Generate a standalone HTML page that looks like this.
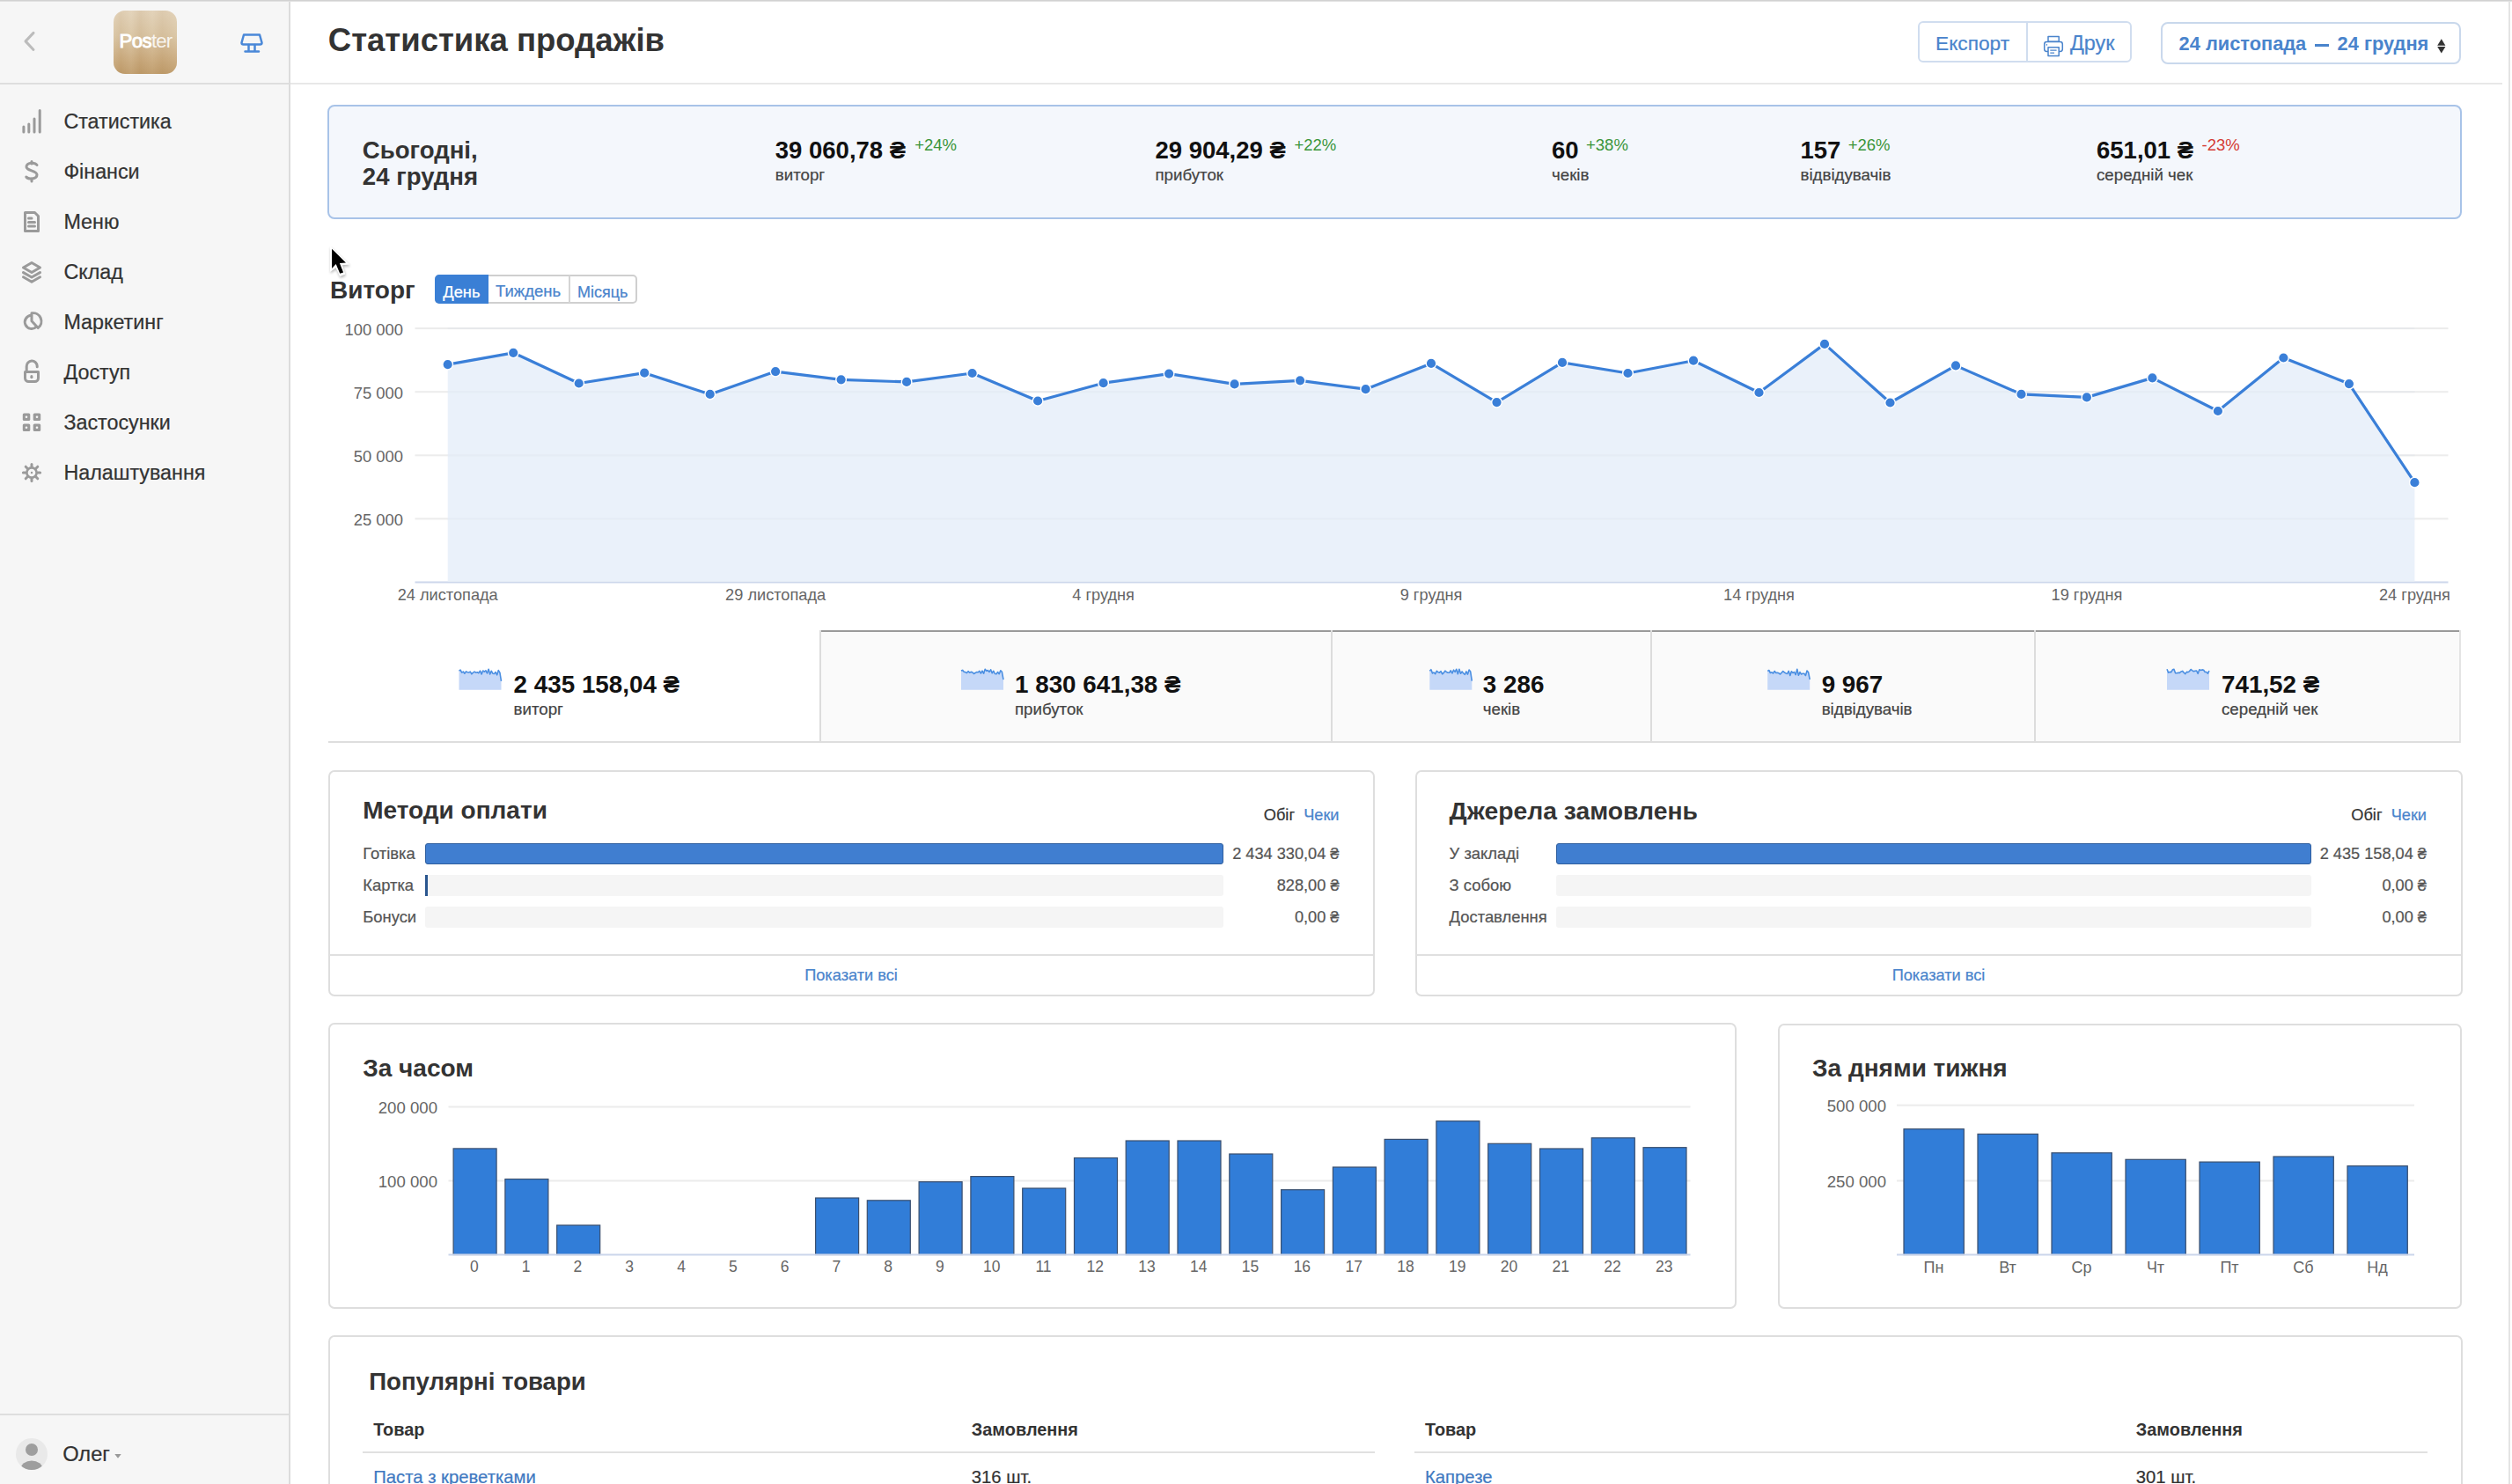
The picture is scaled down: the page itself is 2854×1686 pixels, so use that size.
<!DOCTYPE html>
<html><head><meta charset="utf-8"><style>
html,body{margin:0;padding:0;width:2854px;height:1686px;overflow:hidden;background:#fff;}
body{position:relative;font-family:"Liberation Sans",sans-serif;}
.t{position:absolute;line-height:1;white-space:nowrap;z-index:3;}
.r{-webkit-text-stroke:0.22px currentColor;}
svg.ov{position:absolute;left:0;top:0;z-index:2;}
</style></head><body>

<div style="position:absolute;left:0;top:0;width:328px;height:1686px;background:#f6f6f6;"></div>
<div style="position:absolute;left:328px;top:0;width:2px;height:1686px;background:#dcdcdc;"></div>
<div style="position:absolute;left:0;top:94px;width:328px;height:2px;background:#dedede;"></div>
<div style="position:absolute;left:0;top:1606px;width:328px;height:2px;background:#dedede;"></div>
<div style="position:absolute;left:0;top:0;width:2854px;height:2px;background:linear-gradient(#c9c9c9,#e9e9e9);z-index:5;"></div>
<div style="position:absolute;left:2850px;top:0;width:2px;height:1686px;background:#e4e4e4;"></div>
<div style="position:absolute;left:330px;top:94px;width:2513px;height:2px;background:#e8e8e8;"></div>
<div style="position:absolute;left:129px;top:12px;width:72px;height:72px;border-radius:13px;overflow:hidden;background:linear-gradient(180deg,#e2d2b8 0%,#d9c4a2 40%,#cbac80 75%,#bf9c6b 100%);"><div style="position:absolute;inset:0;background:linear-gradient(90deg,rgba(255,255,255,0.05) 0px,rgba(140,90,40,0.05) 8px,rgba(255,255,255,0.06) 20px,rgba(140,90,40,0.07) 30px,rgba(255,255,255,0.04) 44px,rgba(140,90,40,0.06) 55px,rgba(255,255,255,0.05) 72px);"></div></div>
<div style="position:absolute;left:2179px;top:24px;width:243px;height:47px;border:2px solid #d0ddef;border-radius:6px;box-sizing:border-box;"></div>
<div style="position:absolute;left:2302px;top:24px;width:2px;height:47px;background:#d0ddef;"></div>
<div style="position:absolute;left:2455px;top:25px;width:341px;height:48px;border:2px solid #c9d8ec;border-radius:8px;box-sizing:border-box;"></div>
<div style="position:absolute;left:2630.3px;top:50.2px;width:15.4px;height:2.6px;background:#4a84cc;"></div>
<div style="position:absolute;left:372px;top:119px;width:2425px;height:130px;border:2px solid #a8c3e8;border-radius:8px;box-sizing:border-box;background:#f4f7fc;"></div>
<div style="position:absolute;left:494px;top:312px;width:230px;height:33px;border:2px solid #cfcfcf;border-radius:5px;box-sizing:border-box;"></div>
<div style="position:absolute;left:494px;top:312px;width:61px;height:33px;background:#3a7fd5;border-radius:5px 0 0 5px;"></div>
<div style="position:absolute;left:646px;top:313px;width:2px;height:31px;background:#d4d4d4;"></div>
<div style="position:absolute;left:931px;top:716px;width:1864px;height:126px;background:#fafafa;"></div>
<div style="position:absolute;left:931px;top:715.5px;width:1864px;height:2px;background:#9a9a9a;"></div>
<div style="position:absolute;left:931px;top:716px;width:2px;height:126px;background:#dcdcdc;"></div>
<div style="position:absolute;left:1511.5px;top:716px;width:2px;height:126px;background:#dcdcdc;"></div>
<div style="position:absolute;left:1874.5px;top:716px;width:2px;height:126px;background:#dcdcdc;"></div>
<div style="position:absolute;left:2310.5px;top:716px;width:2px;height:126px;background:#dcdcdc;"></div>
<div style="position:absolute;left:2793.5px;top:716px;width:2px;height:128px;background:#e4e4e4;"></div>
<div style="position:absolute;left:373px;top:842px;width:2422px;height:2px;background:#dedede;"></div>
<div style="position:absolute;left:372.5px;top:874.5px;width:1189px;height:257px;border:2px solid #dedede;border-radius:7px;box-sizing:border-box;background:#fff;"></div>
<div style="position:absolute;left:1607.5px;top:874.5px;width:1190px;height:257px;border:2px solid #dedede;border-radius:7px;box-sizing:border-box;background:#fff;"></div>
<div style="position:absolute;left:374px;top:1084px;width:1186px;height:2px;background:#e0e0e0;"></div>
<div style="position:absolute;left:1609px;top:1084px;width:1187px;height:2px;background:#e0e0e0;"></div>
<div style="position:absolute;left:483.3px;top:958px;width:906.5px;height:24px;background:#f5f5f5;border-radius:3px;"></div>
<div style="position:absolute;left:483.3px;top:958px;width:906.5px;height:24px;background:#407ed0;border:1.5px solid #2f5e9e;border-radius:3px;box-sizing:border-box;"></div>
<div style="position:absolute;left:483.3px;top:994px;width:906.5px;height:24px;background:#f5f5f5;border-radius:3px;"></div>
<div style="position:absolute;left:483.3px;top:994px;width:2.4px;height:24px;background:#2a568f;"></div>
<div style="position:absolute;left:483.3px;top:1030px;width:906.5px;height:24px;background:#f5f5f5;border-radius:3px;"></div>
<div style="position:absolute;left:1768.2px;top:958px;width:857.4999999999998px;height:24px;background:#f5f5f5;border-radius:3px;"></div>
<div style="position:absolute;left:1768.2px;top:958px;width:857.4999999999998px;height:24px;background:#407ed0;border:1.5px solid #2f5e9e;border-radius:3px;box-sizing:border-box;"></div>
<div style="position:absolute;left:1768.2px;top:994px;width:857.4999999999998px;height:24px;background:#f5f5f5;border-radius:3px;"></div>
<div style="position:absolute;left:1768.2px;top:1030px;width:857.4999999999998px;height:24px;background:#f5f5f5;border-radius:3px;"></div>
<div style="position:absolute;left:372.5px;top:1162px;width:1600px;height:324.5px;border:2px solid #dedede;border-radius:7px;box-sizing:border-box;background:#fff;"></div>
<div style="position:absolute;left:2019.5px;top:1162.5px;width:777.5px;height:324px;border:2px solid #dedede;border-radius:7px;box-sizing:border-box;background:#fff;"></div>
<div style="position:absolute;left:372.5px;top:1517px;width:2425px;height:300px;border:2px solid #dedede;border-radius:7px;box-sizing:border-box;background:#fff;"></div>
<div style="position:absolute;left:412px;top:1649px;width:1150px;height:2px;background:#e0e0e0;"></div>
<div style="position:absolute;left:1607px;top:1649px;width:1151px;height:2px;background:#e0e0e0;"></div>
<svg class="ov" width="2854" height="1686" viewBox="0 0 2854 1686"><rect x="471.5" y="372.1" width="2310" height="2" fill="#ececec"/>
<rect x="471.5" y="444.2" width="2310" height="2" fill="#ececec"/>
<rect x="471.5" y="516.3" width="2310" height="2" fill="#ececec"/>
<rect x="471.5" y="588.4" width="2310" height="2" fill="#ececec"/>
<rect x="471.5" y="660.5" width="2310" height="2" fill="#ccd6eb"/>
<path d="M508.7,660.5 L508.7,414.1 L583.2,400.8 L657.7,435.5 L732.2,423.7 L806.7,447.9 L881.1,422.1 L955.6,431.3 L1030.1,433.9 L1104.6,424.0 L1179.1,455.5 L1253.6,435.2 L1328.1,424.6 L1402.6,436.4 L1477.1,432.3 L1551.6,442.2 L1626.0,412.9 L1700.5,457.1 L1775.0,411.9 L1849.5,424.0 L1924.0,409.7 L1998.5,446.0 L2073.0,390.9 L2147.5,457.5 L2222.0,415.4 L2296.5,447.9 L2370.9,451.4 L2445.4,429.4 L2519.9,467.0 L2594.4,406.5 L2668.9,436.1 L2743.4,548.2 L2743.4,660.5 Z" fill="#eaf1fa"/>
<rect x="508.7" y="372.1" width="2234.7" height="2" fill="#dde3ec" opacity="0.35"/>
<rect x="508.7" y="444.2" width="2234.7" height="2" fill="#dde3ec" opacity="0.35"/>
<rect x="508.7" y="516.3" width="2234.7" height="2" fill="#dde3ec" opacity="0.35"/>
<rect x="508.7" y="588.4" width="2234.7" height="2" fill="#dde3ec" opacity="0.35"/>
<path d="M508.7,414.1 L583.2,400.8 L657.7,435.5 L732.2,423.7 L806.7,447.9 L881.1,422.1 L955.6,431.3 L1030.1,433.9 L1104.6,424.0 L1179.1,455.5 L1253.6,435.2 L1328.1,424.6 L1402.6,436.4 L1477.1,432.3 L1551.6,442.2 L1626.0,412.9 L1700.5,457.1 L1775.0,411.9 L1849.5,424.0 L1924.0,409.7 L1998.5,446.0 L2073.0,390.9 L2147.5,457.5 L2222.0,415.4 L2296.5,447.9 L2370.9,451.4 L2445.4,429.4 L2519.9,467.0 L2594.4,406.5 L2668.9,436.1 L2743.4,548.2" fill="none" stroke="#3a7fd8" stroke-width="3.2" stroke-linejoin="round"/>
<circle cx="508.7" cy="414.1" r="5.8" fill="#3a7fd8" stroke="#fff" stroke-width="1.4"/>
<circle cx="583.2" cy="400.8" r="5.8" fill="#3a7fd8" stroke="#fff" stroke-width="1.4"/>
<circle cx="657.7" cy="435.5" r="5.8" fill="#3a7fd8" stroke="#fff" stroke-width="1.4"/>
<circle cx="732.2" cy="423.7" r="5.8" fill="#3a7fd8" stroke="#fff" stroke-width="1.4"/>
<circle cx="806.7" cy="447.9" r="5.8" fill="#3a7fd8" stroke="#fff" stroke-width="1.4"/>
<circle cx="881.1" cy="422.1" r="5.8" fill="#3a7fd8" stroke="#fff" stroke-width="1.4"/>
<circle cx="955.6" cy="431.3" r="5.8" fill="#3a7fd8" stroke="#fff" stroke-width="1.4"/>
<circle cx="1030.1" cy="433.9" r="5.8" fill="#3a7fd8" stroke="#fff" stroke-width="1.4"/>
<circle cx="1104.6" cy="424.0" r="5.8" fill="#3a7fd8" stroke="#fff" stroke-width="1.4"/>
<circle cx="1179.1" cy="455.5" r="5.8" fill="#3a7fd8" stroke="#fff" stroke-width="1.4"/>
<circle cx="1253.6" cy="435.2" r="5.8" fill="#3a7fd8" stroke="#fff" stroke-width="1.4"/>
<circle cx="1328.1" cy="424.6" r="5.8" fill="#3a7fd8" stroke="#fff" stroke-width="1.4"/>
<circle cx="1402.6" cy="436.4" r="5.8" fill="#3a7fd8" stroke="#fff" stroke-width="1.4"/>
<circle cx="1477.1" cy="432.3" r="5.8" fill="#3a7fd8" stroke="#fff" stroke-width="1.4"/>
<circle cx="1551.6" cy="442.2" r="5.8" fill="#3a7fd8" stroke="#fff" stroke-width="1.4"/>
<circle cx="1626.0" cy="412.9" r="5.8" fill="#3a7fd8" stroke="#fff" stroke-width="1.4"/>
<circle cx="1700.5" cy="457.1" r="5.8" fill="#3a7fd8" stroke="#fff" stroke-width="1.4"/>
<circle cx="1775.0" cy="411.9" r="5.8" fill="#3a7fd8" stroke="#fff" stroke-width="1.4"/>
<circle cx="1849.5" cy="424.0" r="5.8" fill="#3a7fd8" stroke="#fff" stroke-width="1.4"/>
<circle cx="1924.0" cy="409.7" r="5.8" fill="#3a7fd8" stroke="#fff" stroke-width="1.4"/>
<circle cx="1998.5" cy="446.0" r="5.8" fill="#3a7fd8" stroke="#fff" stroke-width="1.4"/>
<circle cx="2073.0" cy="390.9" r="5.8" fill="#3a7fd8" stroke="#fff" stroke-width="1.4"/>
<circle cx="2147.5" cy="457.5" r="5.8" fill="#3a7fd8" stroke="#fff" stroke-width="1.4"/>
<circle cx="2222.0" cy="415.4" r="5.8" fill="#3a7fd8" stroke="#fff" stroke-width="1.4"/>
<circle cx="2296.5" cy="447.9" r="5.8" fill="#3a7fd8" stroke="#fff" stroke-width="1.4"/>
<circle cx="2370.9" cy="451.4" r="5.8" fill="#3a7fd8" stroke="#fff" stroke-width="1.4"/>
<circle cx="2445.4" cy="429.4" r="5.8" fill="#3a7fd8" stroke="#fff" stroke-width="1.4"/>
<circle cx="2519.9" cy="467.0" r="5.8" fill="#3a7fd8" stroke="#fff" stroke-width="1.4"/>
<circle cx="2594.4" cy="406.5" r="5.8" fill="#3a7fd8" stroke="#fff" stroke-width="1.4"/>
<circle cx="2668.9" cy="436.1" r="5.8" fill="#3a7fd8" stroke="#fff" stroke-width="1.4"/>
<circle cx="2743.4" cy="548.2" r="5.8" fill="#3a7fd8" stroke="#fff" stroke-width="1.4"/>
<path d="M521.5,783.8 L521.5,762.2 L523.1,761.1 L524.7,764.1 L526.3,763.1 L527.9,765.2 L529.5,762.9 L531.1,763.7 L532.7,764.0 L534.3,763.1 L535.9,765.8 L537.5,764.1 L539.1,763.1 L540.7,764.2 L542.3,763.8 L543.9,764.7 L545.5,762.1 L547.1,766.0 L548.7,762.0 L550.3,763.1 L551.9,761.8 L553.5,765.0 L555.1,760.2 L556.7,766.0 L558.3,762.3 L559.9,765.2 L561.5,765.5 L563.1,763.6 L564.7,766.8 L566.3,761.6 L567.9,764.1 L569.5,773.9 L569.5,783.8 Z" fill="#c5d8f8"/>
<path d="M521.5,762.2 L523.1,761.1 L524.7,764.1 L526.3,763.1 L527.9,765.2 L529.5,762.9 L531.1,763.7 L532.7,764.0 L534.3,763.1 L535.9,765.8 L537.5,764.1 L539.1,763.1 L540.7,764.2 L542.3,763.8 L543.9,764.7 L545.5,762.1 L547.1,766.0 L548.7,762.0 L550.3,763.1 L551.9,761.8 L553.5,765.0 L555.1,760.2 L556.7,766.0 L558.3,762.3 L559.9,765.2 L561.5,765.5 L563.1,763.6 L564.7,766.8 L566.3,761.6 L567.9,764.1 L569.5,773.9" fill="none" stroke="#4b8fe2" stroke-width="1.6" stroke-linejoin="round"/>
<path d="M1092.0,783.8 L1092.0,762.1 L1093.6,761.4 L1095.2,763.2 L1096.8,763.6 L1098.4,764.6 L1100.0,762.7 L1101.6,764.2 L1103.2,763.4 L1104.8,763.7 L1106.4,765.5 L1108.0,764.5 L1109.6,763.6 L1111.2,763.8 L1112.8,762.4 L1114.4,765.0 L1116.0,762.2 L1117.6,765.2 L1119.2,760.2 L1120.8,762.3 L1122.4,761.5 L1124.0,763.4 L1125.6,760.8 L1127.2,764.7 L1128.8,762.3 L1130.4,765.5 L1132.0,765.8 L1133.6,763.5 L1135.2,765.7 L1136.8,761.8 L1138.4,763.4 L1140.0,772.1 L1140.0,783.8 Z" fill="#c5d8f8"/>
<path d="M1092.0,762.1 L1093.6,761.4 L1095.2,763.2 L1096.8,763.6 L1098.4,764.6 L1100.0,762.7 L1101.6,764.2 L1103.2,763.4 L1104.8,763.7 L1106.4,765.5 L1108.0,764.5 L1109.6,763.6 L1111.2,763.8 L1112.8,762.4 L1114.4,765.0 L1116.0,762.2 L1117.6,765.2 L1119.2,760.2 L1120.8,762.3 L1122.4,761.5 L1124.0,763.4 L1125.6,760.8 L1127.2,764.7 L1128.8,762.3 L1130.4,765.5 L1132.0,765.8 L1133.6,763.5 L1135.2,765.7 L1136.8,761.8 L1138.4,763.4 L1140.0,772.1" fill="none" stroke="#4b8fe2" stroke-width="1.6" stroke-linejoin="round"/>
<path d="M1624.3,783.8 L1624.3,762.3 L1625.9,760.7 L1627.5,764.9 L1629.1,764.0 L1630.7,765.7 L1632.3,762.3 L1633.9,763.7 L1635.5,764.2 L1637.1,762.7 L1638.7,765.8 L1640.3,764.3 L1641.9,762.2 L1643.5,763.5 L1645.1,764.2 L1646.7,764.3 L1648.3,761.8 L1649.9,765.0 L1651.5,761.2 L1653.1,763.4 L1654.7,760.3 L1656.3,765.7 L1657.9,760.2 L1659.5,765.3 L1661.1,763.0 L1662.7,765.0 L1664.3,766.3 L1665.9,762.9 L1667.5,766.1 L1669.1,761.1 L1670.7,763.1 L1672.3,773.6 L1672.3,783.8 Z" fill="#c5d8f8"/>
<path d="M1624.3,762.3 L1625.9,760.7 L1627.5,764.9 L1629.1,764.0 L1630.7,765.7 L1632.3,762.3 L1633.9,763.7 L1635.5,764.2 L1637.1,762.7 L1638.7,765.8 L1640.3,764.3 L1641.9,762.2 L1643.5,763.5 L1645.1,764.2 L1646.7,764.3 L1648.3,761.8 L1649.9,765.0 L1651.5,761.2 L1653.1,763.4 L1654.7,760.3 L1656.3,765.7 L1657.9,760.2 L1659.5,765.3 L1661.1,763.0 L1662.7,765.0 L1664.3,766.3 L1665.9,762.9 L1667.5,766.1 L1669.1,761.1 L1670.7,763.1 L1672.3,773.6" fill="none" stroke="#4b8fe2" stroke-width="1.6" stroke-linejoin="round"/>
<path d="M2008.2,783.8 L2008.2,762.4 L2009.8,761.5 L2011.4,764.5 L2013.0,763.8 L2014.6,765.0 L2016.2,762.5 L2017.8,764.4 L2019.4,764.2 L2021.0,764.8 L2022.6,766.0 L2024.2,764.3 L2025.8,762.6 L2027.4,764.0 L2029.0,764.9 L2030.6,765.5 L2032.2,762.4 L2033.8,767.5 L2035.4,762.8 L2037.0,764.5 L2038.6,763.5 L2040.2,766.6 L2041.8,760.2 L2043.4,767.3 L2045.0,763.6 L2046.6,766.0 L2048.2,765.3 L2049.8,765.2 L2051.4,767.5 L2053.0,762.1 L2054.6,763.9 L2056.2,772.0 L2056.2,783.8 Z" fill="#c5d8f8"/>
<path d="M2008.2,762.4 L2009.8,761.5 L2011.4,764.5 L2013.0,763.8 L2014.6,765.0 L2016.2,762.5 L2017.8,764.4 L2019.4,764.2 L2021.0,764.8 L2022.6,766.0 L2024.2,764.3 L2025.8,762.6 L2027.4,764.0 L2029.0,764.9 L2030.6,765.5 L2032.2,762.4 L2033.8,767.5 L2035.4,762.8 L2037.0,764.5 L2038.6,763.5 L2040.2,766.6 L2041.8,760.2 L2043.4,767.3 L2045.0,763.6 L2046.6,766.0 L2048.2,765.3 L2049.8,765.2 L2051.4,767.5 L2053.0,762.1 L2054.6,763.9 L2056.2,772.0" fill="none" stroke="#4b8fe2" stroke-width="1.6" stroke-linejoin="round"/>
<path d="M2462.0,783.8 L2462.0,760.2 L2463.6,764.1 L2465.2,763.4 L2466.8,763.7 L2468.4,760.8 L2470.0,760.4 L2471.6,764.8 L2473.2,764.7 L2474.8,764.4 L2476.4,764.4 L2478.0,763.0 L2479.6,762.4 L2481.2,764.2 L2482.8,765.6 L2484.4,763.4 L2486.0,763.6 L2487.6,762.6 L2489.2,760.5 L2490.8,761.9 L2492.4,762.8 L2494.0,762.3 L2495.6,762.0 L2497.2,765.3 L2498.8,760.7 L2500.4,761.4 L2502.0,760.9 L2503.6,761.3 L2505.2,763.5 L2506.8,763.5 L2508.4,765.1 L2510.0,762.2 L2510.0,783.8 Z" fill="#c5d8f8"/>
<path d="M2462.0,760.2 L2463.6,764.1 L2465.2,763.4 L2466.8,763.7 L2468.4,760.8 L2470.0,760.4 L2471.6,764.8 L2473.2,764.7 L2474.8,764.4 L2476.4,764.4 L2478.0,763.0 L2479.6,762.4 L2481.2,764.2 L2482.8,765.6 L2484.4,763.4 L2486.0,763.6 L2487.6,762.6 L2489.2,760.5 L2490.8,761.9 L2492.4,762.8 L2494.0,762.3 L2495.6,762.0 L2497.2,765.3 L2498.8,760.7 L2500.4,761.4 L2502.0,760.9 L2503.6,761.3 L2505.2,763.5 L2506.8,763.5 L2508.4,765.1 L2510.0,762.2" fill="none" stroke="#4b8fe2" stroke-width="1.6" stroke-linejoin="round"/>
<rect x="509.5" y="1256.5" width="1411" height="2" fill="#ececec"/>
<rect x="509.5" y="1340.5" width="1411" height="2" fill="#ececec"/>
<rect x="515.1" y="1304.9" width="49" height="120.6" fill="#317dd8" stroke="#3a4f6e" stroke-width="1.2"/>
<rect x="573.9" y="1339.6" width="49" height="85.9" fill="#317dd8" stroke="#3a4f6e" stroke-width="1.2"/>
<rect x="632.7" y="1392.0" width="49" height="33.5" fill="#317dd8" stroke="#3a4f6e" stroke-width="1.2"/>
<rect x="926.6" y="1361.0" width="49" height="64.5" fill="#317dd8" stroke="#3a4f6e" stroke-width="1.2"/>
<rect x="985.3" y="1363.8" width="49" height="61.7" fill="#317dd8" stroke="#3a4f6e" stroke-width="1.2"/>
<rect x="1044.1" y="1342.7" width="49" height="82.8" fill="#317dd8" stroke="#3a4f6e" stroke-width="1.2"/>
<rect x="1102.9" y="1336.6" width="49" height="88.9" fill="#317dd8" stroke="#3a4f6e" stroke-width="1.2"/>
<rect x="1161.7" y="1350.0" width="49" height="75.5" fill="#317dd8" stroke="#3a4f6e" stroke-width="1.2"/>
<rect x="1220.5" y="1315.5" width="49" height="110.0" fill="#317dd8" stroke="#3a4f6e" stroke-width="1.2"/>
<rect x="1279.2" y="1296.0" width="49" height="129.5" fill="#317dd8" stroke="#3a4f6e" stroke-width="1.2"/>
<rect x="1338.0" y="1296.0" width="49" height="129.5" fill="#317dd8" stroke="#3a4f6e" stroke-width="1.2"/>
<rect x="1396.8" y="1311.0" width="49" height="114.5" fill="#317dd8" stroke="#3a4f6e" stroke-width="1.2"/>
<rect x="1455.6" y="1351.7" width="49" height="73.8" fill="#317dd8" stroke="#3a4f6e" stroke-width="1.2"/>
<rect x="1514.4" y="1326.0" width="49" height="99.5" fill="#317dd8" stroke="#3a4f6e" stroke-width="1.2"/>
<rect x="1573.1" y="1294.4" width="49" height="131.1" fill="#317dd8" stroke="#3a4f6e" stroke-width="1.2"/>
<rect x="1631.9" y="1273.7" width="49" height="151.8" fill="#317dd8" stroke="#3a4f6e" stroke-width="1.2"/>
<rect x="1690.7" y="1299.3" width="49" height="126.2" fill="#317dd8" stroke="#3a4f6e" stroke-width="1.2"/>
<rect x="1749.5" y="1305.0" width="49" height="120.5" fill="#317dd8" stroke="#3a4f6e" stroke-width="1.2"/>
<rect x="1808.3" y="1292.8" width="49" height="132.7" fill="#317dd8" stroke="#3a4f6e" stroke-width="1.2"/>
<rect x="1867.0" y="1303.7" width="49" height="121.8" fill="#317dd8" stroke="#3a4f6e" stroke-width="1.2"/>
<rect x="509.5" y="1424.5" width="1411" height="2" fill="#ccd6eb"/>
<rect x="2155" y="1254.7" width="588" height="2" fill="#ececec"/>
<rect x="2155" y="1340.5" width="588" height="2" fill="#ececec"/>
<rect x="2163.0" y="1282.7" width="68.3" height="142.8" fill="#317dd8" stroke="#3a4f6e" stroke-width="1.2"/>
<rect x="2247.0" y="1288.4" width="68.3" height="137.1" fill="#317dd8" stroke="#3a4f6e" stroke-width="1.2"/>
<rect x="2331.0" y="1309.8" width="68.3" height="115.7" fill="#317dd8" stroke="#3a4f6e" stroke-width="1.2"/>
<rect x="2415.0" y="1317.3" width="68.3" height="108.2" fill="#317dd8" stroke="#3a4f6e" stroke-width="1.2"/>
<rect x="2499.0" y="1320.1" width="68.3" height="105.4" fill="#317dd8" stroke="#3a4f6e" stroke-width="1.2"/>
<rect x="2583.0" y="1314.0" width="68.3" height="111.5" fill="#317dd8" stroke="#3a4f6e" stroke-width="1.2"/>
<rect x="2667.0" y="1324.7" width="68.3" height="100.8" fill="#317dd8" stroke="#3a4f6e" stroke-width="1.2"/>
<rect x="2155" y="1424.5" width="588" height="2" fill="#ccd6eb"/>

<g fill="none" stroke="#9a9a9a" stroke-width="3" stroke-linecap="round" stroke-linejoin="round">
 <path d="M26.9,144 V150 M32.8,141 V150 M39,135 V150 M45.2,125.5 V150"/>
 <path d="M42,187.5 C40,184.5 31,184 30,189 C29,194 42,193.5 42,198.5 C42,204 32,204 29.8,201" />
 <path d="M36,183.5 V186 M36,203 V206" />
 <path d="M28.5,241.5 H39.5 L43.5,245.5 V262.5 H28.5 Z" />
 <path d="M32.5,248 H36 M32.5,252.5 H39.5 M32.5,257 H39.5" />
 <path d="M36,298.5 L45.5,304 L36,309.5 L26.5,304 Z" />
 <path d="M26.5,309.6 L36,315 L45.5,309.6 M26.5,314.8 L36,320.2 L45.5,314.8" />
 <path d="M35.6,358.3 A7.6,7.6 0 1 0 41.3,371.2" />
 <path d="M36,355.8 V364.8 L43.2,372.6 A9.4,9.4 0 0 0 36,355.8 Z" />
 <path d="M28.5,422.5 H43.5 V429.5 A4,4 0 0 1 39.5,433.5 H32.5 A4,4 0 0 1 28.5,429.5 Z" />
 <path d="M30.2,422 V416.3 A6,6 0 0 1 42.2,415.8 V416.8" />
 <path d="M42.80,537.00 L45.60,537.00 M40.81,541.81 L42.79,543.79 M36.00,543.80 L36.00,546.60 M31.19,541.81 L29.21,543.79 M29.20,537.00 L26.40,537.00 M31.19,532.19 L29.21,530.21 M36.00,530.20 L36.00,527.40 M40.81,532.19 L42.79,530.21"/>
 <circle cx="36" cy="537" r="5.6" stroke-width="2.6"/>
 <path d="M38,37.4 L29,46.9 L38,56.5" stroke="#bcbcbc"/>
</g>
<g fill="#9a9a9a">
 <ellipse cx="35.9" cy="428.2" rx="1.6" ry="2.1"/>
 <rect x="25.8" y="469.4" width="8.5" height="8.7" rx="1.6"/><rect x="37.7" y="469.4" width="8.5" height="8.7" rx="1.6"/>
 <rect x="25.8" y="481.4" width="8.5" height="8.7" rx="1.6"/><rect x="37.7" y="481.4" width="8.5" height="8.7" rx="1.6"/>
</g>
<g fill="#f6f6f6"><circle cx="30" cy="473.7" r="1.3"/><circle cx="42" cy="473.7" r="1.3"/><circle cx="30" cy="485.7" r="1.3"/><circle cx="42" cy="485.7" r="1.3"/></g>
<circle cx="36" cy="537" r="1.2" fill="#9a9a9a"/>
<g fill="none" stroke="#4a88d8" stroke-width="2.5" stroke-linecap="round" stroke-linejoin="round">
 <path d="M277,39.5 H295 L297.5,48.5 Q297.5,50.5 295.5,50.5 H276.5 Q274.5,50.5 274.5,48.5 Z"/>
 <path d="M282.5,51 V58 M289.5,51 V58 M278.5,58.5 H294"/>
</g>
<circle cx="36" cy="1652" r="18" fill="#e9e9e9"/>
<circle cx="36" cy="1647" r="7" fill="#9e9e9e"/>
<clipPath id="avc"><circle cx="36" cy="1652" r="18"/></clipPath>
<ellipse cx="36" cy="1669" rx="12.5" ry="9.5" fill="#9e9e9e" clip-path="url(#avc)"/>
<path d="M130.3,1652 L137.7,1652 L134,1656.8 Z" fill="#999"/>
<g fill="#333"><path d="M2769.2,51.7 L2773.8,44.2 L2778.4,51.7 Z"/><path d="M2769.2,53 L2778.4,53 L2773.8,60.5 Z"/></g>
<g fill="none" stroke="#4a84cc" stroke-width="1.5" stroke-linejoin="round">
 <rect x="2327" y="41.6" width="12.2" height="5.6"/>
 <rect x="2322.7" y="47.6" width="20.6" height="10.8" rx="2.6"/>
 <rect x="2327" y="53.8" width="12.2" height="9.6" fill="#fff"/>
 <path d="M2329.3,57.2 H2336.6 M2329.3,60.2 H2334" stroke-width="1.3"/>
</g>
<circle cx="2325.4" cy="50.9" r="0.8" fill="#4a84cc"/>
<g>
 <filter id="cblur" x="-50%" y="-50%" width="200%" height="200%"><feGaussianBlur stdDeviation="1.6"/></filter>
 <path d="M375,279.2 L375,309 L381.5,304.2 L386.2,314.1 L392.3,311.4 L388.9,301.3 L397.3,300.6 Z" fill="#000" opacity="0.28" transform="translate(0.6,1.8)" filter="url(#cblur)"/>
 <path d="M375,279.2 L375,309 L381.5,304.2 L386.2,314.1 L392.3,311.4 L388.9,301.3 L397.3,300.6 Z" fill="#fff"/>
 <path d="M377.1,282.8 L377.1,304.9 L381.7,300.1 L386.2,310.8 L390.1,309.4 L385.9,299 L393,298.6 Z" fill="#000"/>
</g>
</svg>
<div class="t" style="left:135.60px;top:35.70px;font-size:22.2px;color:#fff;font-weight:700;z-index:6;font-weight:400;"><span style="font-weight:400;letter-spacing:-0.6px;-webkit-text-stroke:0.9px #fff">Pos</span><span style="font-weight:400;letter-spacing:-0.9px;-webkit-text-stroke:0;color:rgba(255,255,255,0.85)">ter</span></div>
<div class="t r" style="left:72.40px;top:126.77px;font-size:23.3px;color:#333;">Статистика</div>
<div class="t r" style="left:72.40px;top:183.77px;font-size:23.3px;color:#333;">Фінанси</div>
<div class="t r" style="left:72.40px;top:240.77px;font-size:23.3px;color:#333;">Меню</div>
<div class="t r" style="left:72.40px;top:297.77px;font-size:23.3px;color:#333;">Склад</div>
<div class="t r" style="left:72.40px;top:354.77px;font-size:23.3px;color:#333;">Маркетинг</div>
<div class="t r" style="left:72.40px;top:411.77px;font-size:23.3px;color:#333;">Доступ</div>
<div class="t r" style="left:72.40px;top:468.77px;font-size:23.3px;color:#333;">Застосунки</div>
<div class="t r" style="left:72.40px;top:525.77px;font-size:23.3px;color:#333;">Налаштування</div>
<div class="t r" style="left:71.20px;top:1640.93px;font-size:23.7px;color:#333;">Олег</div>
<div class="t" style="left:372.80px;top:28.09px;font-size:36.5px;color:#333;font-weight:700;">Статистика продажів</div>
<div class="t r" style="left:2199.00px;top:38.28px;font-size:22.7px;color:#4a84cc;">Експорт</div>
<div class="t r" style="left:2352.00px;top:37.68px;font-size:23.4px;color:#4a84cc;">Друк</div>
<div class="t" style="left:2475.60px;top:38.64px;font-size:21.8px;color:#4a84cc;font-weight:700;">24 листопада</div>
<div class="t" style="left:2655.60px;top:38.64px;font-size:21.8px;color:#4a84cc;font-weight:700;">24 грудня</div>
<div class="t" style="left:411.80px;top:156.63px;font-size:27.6px;color:#333;font-weight:700;">Сьогодні,</div>
<div class="t" style="left:411.80px;top:186.93px;font-size:27.6px;color:#333;font-weight:700;">24 грудня</div>
<div class="t" style="left:880.80px;top:156.51px;font-size:27.5px;color:#111;font-weight:700;">39 060,78 ₴</div>
<div class="t r" style="left:1039.20px;top:155.53px;font-size:18.5px;color:#3a953a;-webkit-text-stroke:0;">+24%</div>
<div class="t r" style="left:880.80px;top:190.16px;font-size:18.7px;color:#444;">виторг</div>
<div class="t" style="left:1312.50px;top:156.51px;font-size:27.5px;color:#111;font-weight:700;">29 904,29 ₴</div>
<div class="t r" style="left:1470.40px;top:155.53px;font-size:18.5px;color:#3a953a;-webkit-text-stroke:0;">+22%</div>
<div class="t r" style="left:1312.50px;top:190.16px;font-size:18.7px;color:#444;">прибуток</div>
<div class="t" style="left:1763.00px;top:156.51px;font-size:27.5px;color:#111;font-weight:700;">60</div>
<div class="t r" style="left:1802.00px;top:155.53px;font-size:18.5px;color:#3a953a;-webkit-text-stroke:0;">+38%</div>
<div class="t r" style="left:1763.00px;top:190.16px;font-size:18.7px;color:#444;">чеків</div>
<div class="t" style="left:2045.50px;top:156.51px;font-size:27.5px;color:#111;font-weight:700;">157</div>
<div class="t r" style="left:2099.70px;top:155.53px;font-size:18.5px;color:#3a953a;-webkit-text-stroke:0;">+26%</div>
<div class="t r" style="left:2045.50px;top:190.16px;font-size:18.7px;color:#444;">відвідувачів</div>
<div class="t" style="left:2382.00px;top:156.51px;font-size:27.5px;color:#111;font-weight:700;">651,01 ₴</div>
<div class="t r" style="left:2501.60px;top:155.53px;font-size:18.5px;color:#d43c34;-webkit-text-stroke:0;">-23%</div>
<div class="t r" style="left:2382.00px;top:190.16px;font-size:18.7px;color:#444;">середній чек</div>
<div class="t" style="left:375.00px;top:315.89px;font-size:28px;color:#333;font-weight:700;">Виторг</div>
<div class="t r" style="left:503.30px;top:322.50px;font-size:18.3px;color:#fff;">День</div>
<div class="t r" style="left:563.00px;top:322.33px;font-size:18.5px;color:#4a84cc;">Тиждень</div>
<div class="t r" style="left:656.00px;top:322.76px;font-size:18.0px;color:#4a84cc;">Місяць</div>
<div class="t r" style="left:458.00px;top:365.52px;font-size:18.4px;color:#666;transform:translateX(-100%);-webkit-text-stroke:0;">100 000</div>
<div class="t r" style="left:458.00px;top:437.62px;font-size:18.4px;color:#666;transform:translateX(-100%);-webkit-text-stroke:0;">75 000</div>
<div class="t r" style="left:458.00px;top:509.72px;font-size:18.4px;color:#666;transform:translateX(-100%);-webkit-text-stroke:0;">50 000</div>
<div class="t r" style="left:458.00px;top:581.82px;font-size:18.4px;color:#666;transform:translateX(-100%);-webkit-text-stroke:0;">25 000</div>
<div class="t r" style="left:508.70px;top:666.59px;font-size:18.2px;color:#666;transform:translateX(-50%);-webkit-text-stroke:0;">24 листопада</div>
<div class="t r" style="left:881.15px;top:666.59px;font-size:18.2px;color:#666;transform:translateX(-50%);-webkit-text-stroke:0;">29 листопада</div>
<div class="t r" style="left:1253.60px;top:666.59px;font-size:18.2px;color:#666;transform:translateX(-50%);-webkit-text-stroke:0;">4 грудня</div>
<div class="t r" style="left:1626.05px;top:666.59px;font-size:18.2px;color:#666;transform:translateX(-50%);-webkit-text-stroke:0;">9 грудня</div>
<div class="t r" style="left:1998.50px;top:666.59px;font-size:18.2px;color:#666;transform:translateX(-50%);-webkit-text-stroke:0;">14 грудня</div>
<div class="t r" style="left:2370.95px;top:666.59px;font-size:18.2px;color:#666;transform:translateX(-50%);-webkit-text-stroke:0;">19 грудня</div>
<div class="t r" style="left:2743.40px;top:666.59px;font-size:18.2px;color:#666;transform:translateX(-50%);-webkit-text-stroke:0;">24 грудня</div>
<div class="t" style="left:583.60px;top:763.66px;font-size:27.8px;color:#111;font-weight:700;">2 435 158,04 ₴</div>
<div class="t r" style="left:583.60px;top:796.66px;font-size:18.7px;color:#444;">виторг</div>
<div class="t" style="left:1153.00px;top:763.66px;font-size:27.8px;color:#111;font-weight:700;">1 830 641,38 ₴</div>
<div class="t r" style="left:1153.00px;top:796.66px;font-size:18.7px;color:#444;">прибуток</div>
<div class="t" style="left:1684.80px;top:763.66px;font-size:27.8px;color:#111;font-weight:700;">3 286</div>
<div class="t r" style="left:1684.80px;top:796.66px;font-size:18.7px;color:#444;">чеків</div>
<div class="t" style="left:2069.70px;top:763.66px;font-size:27.8px;color:#111;font-weight:700;">9 967</div>
<div class="t r" style="left:2069.70px;top:796.66px;font-size:18.7px;color:#444;">відвідувачів</div>
<div class="t" style="left:2524.00px;top:763.66px;font-size:27.8px;color:#111;font-weight:700;">741,52 ₴</div>
<div class="t r" style="left:2524.00px;top:796.66px;font-size:18.7px;color:#444;">середній чек</div>
<div class="t" style="left:412.20px;top:907.29px;font-size:28px;color:#333;font-weight:700;">Методи оплати</div>
<div class="t" style="left:1646.60px;top:907.04px;font-size:28.3px;color:#333;font-weight:700;">Джерела замовлень</div>
<div class="t r" style="left:1521.50px;top:917.19px;font-size:18.2px;color:#333;transform:translateX(-100%);"><span style="color:#333">Обіг</span>&nbsp;&nbsp;<span style="color:#4a84cc">Чеки</span></div>
<div class="t r" style="left:412.20px;top:961.22px;font-size:18.4px;color:#555;">Готівка</div>
<div class="t r" style="left:1521.50px;top:961.39px;font-size:18.2px;color:#555;transform:translateX(-100%);">2 434 330,04 ₴</div>
<div class="t r" style="left:412.20px;top:997.22px;font-size:18.4px;color:#555;">Картка</div>
<div class="t r" style="left:1521.50px;top:997.39px;font-size:18.2px;color:#555;transform:translateX(-100%);">828,00 ₴</div>
<div class="t r" style="left:412.20px;top:1033.22px;font-size:18.4px;color:#555;">Бонуси</div>
<div class="t r" style="left:1521.50px;top:1033.39px;font-size:18.2px;color:#555;transform:translateX(-100%);">0,00 ₴</div>
<div class="t r" style="left:2757.00px;top:917.19px;font-size:18.2px;color:#333;transform:translateX(-100%);"><span style="color:#333">Обіг</span>&nbsp;&nbsp;<span style="color:#4a84cc">Чеки</span></div>
<div class="t r" style="left:1646.60px;top:961.22px;font-size:18.4px;color:#555;">У закладі</div>
<div class="t r" style="left:2757.00px;top:961.39px;font-size:18.2px;color:#555;transform:translateX(-100%);">2 435 158,04 ₴</div>
<div class="t r" style="left:1646.60px;top:997.22px;font-size:18.4px;color:#555;">З собою</div>
<div class="t r" style="left:2757.00px;top:997.39px;font-size:18.2px;color:#555;transform:translateX(-100%);">0,00 ₴</div>
<div class="t r" style="left:1646.60px;top:1033.22px;font-size:18.4px;color:#555;">Доставлення</div>
<div class="t r" style="left:2757.00px;top:1033.39px;font-size:18.2px;color:#555;transform:translateX(-100%);">0,00 ₴</div>
<div class="t r" style="left:967.00px;top:1098.59px;font-size:18.2px;color:#4a84cc;transform:translateX(-50%);">Показати всі</div>
<div class="t r" style="left:2202.50px;top:1098.59px;font-size:18.2px;color:#4a84cc;transform:translateX(-50%);">Показати всі</div>
<div class="t" style="left:412.20px;top:1199.69px;font-size:28px;color:#333;font-weight:700;">За часом</div>
<div class="t" style="left:2059.00px;top:1199.99px;font-size:28px;color:#333;font-weight:700;">За днями тижня</div>
<div class="t r" style="left:497.00px;top:1250.25px;font-size:18.6px;color:#666;transform:translateX(-100%);-webkit-text-stroke:0;">200 000</div>
<div class="t r" style="left:497.00px;top:1334.25px;font-size:18.6px;color:#666;transform:translateX(-100%);-webkit-text-stroke:0;">100 000</div>
<div class="t r" style="left:538.89px;top:1431.48px;font-size:17.5px;color:#666;transform:translateX(-50%);-webkit-text-stroke:0;">0</div>
<div class="t r" style="left:597.67px;top:1431.48px;font-size:17.5px;color:#666;transform:translateX(-50%);-webkit-text-stroke:0;">1</div>
<div class="t r" style="left:656.45px;top:1431.48px;font-size:17.5px;color:#666;transform:translateX(-50%);-webkit-text-stroke:0;">2</div>
<div class="t r" style="left:715.23px;top:1431.48px;font-size:17.5px;color:#666;transform:translateX(-50%);-webkit-text-stroke:0;">3</div>
<div class="t r" style="left:774.01px;top:1431.48px;font-size:17.5px;color:#666;transform:translateX(-50%);-webkit-text-stroke:0;">4</div>
<div class="t r" style="left:832.79px;top:1431.48px;font-size:17.5px;color:#666;transform:translateX(-50%);-webkit-text-stroke:0;">5</div>
<div class="t r" style="left:891.57px;top:1431.48px;font-size:17.5px;color:#666;transform:translateX(-50%);-webkit-text-stroke:0;">6</div>
<div class="t r" style="left:950.35px;top:1431.48px;font-size:17.5px;color:#666;transform:translateX(-50%);-webkit-text-stroke:0;">7</div>
<div class="t r" style="left:1009.13px;top:1431.48px;font-size:17.5px;color:#666;transform:translateX(-50%);-webkit-text-stroke:0;">8</div>
<div class="t r" style="left:1067.91px;top:1431.48px;font-size:17.5px;color:#666;transform:translateX(-50%);-webkit-text-stroke:0;">9</div>
<div class="t r" style="left:1126.69px;top:1431.48px;font-size:17.5px;color:#666;transform:translateX(-50%);-webkit-text-stroke:0;">10</div>
<div class="t r" style="left:1185.47px;top:1431.48px;font-size:17.5px;color:#666;transform:translateX(-50%);-webkit-text-stroke:0;">11</div>
<div class="t r" style="left:1244.25px;top:1431.48px;font-size:17.5px;color:#666;transform:translateX(-50%);-webkit-text-stroke:0;">12</div>
<div class="t r" style="left:1303.03px;top:1431.48px;font-size:17.5px;color:#666;transform:translateX(-50%);-webkit-text-stroke:0;">13</div>
<div class="t r" style="left:1361.81px;top:1431.48px;font-size:17.5px;color:#666;transform:translateX(-50%);-webkit-text-stroke:0;">14</div>
<div class="t r" style="left:1420.59px;top:1431.48px;font-size:17.5px;color:#666;transform:translateX(-50%);-webkit-text-stroke:0;">15</div>
<div class="t r" style="left:1479.37px;top:1431.48px;font-size:17.5px;color:#666;transform:translateX(-50%);-webkit-text-stroke:0;">16</div>
<div class="t r" style="left:1538.15px;top:1431.48px;font-size:17.5px;color:#666;transform:translateX(-50%);-webkit-text-stroke:0;">17</div>
<div class="t r" style="left:1596.93px;top:1431.48px;font-size:17.5px;color:#666;transform:translateX(-50%);-webkit-text-stroke:0;">18</div>
<div class="t r" style="left:1655.71px;top:1431.48px;font-size:17.5px;color:#666;transform:translateX(-50%);-webkit-text-stroke:0;">19</div>
<div class="t r" style="left:1714.49px;top:1431.48px;font-size:17.5px;color:#666;transform:translateX(-50%);-webkit-text-stroke:0;">20</div>
<div class="t r" style="left:1773.27px;top:1431.48px;font-size:17.5px;color:#666;transform:translateX(-50%);-webkit-text-stroke:0;">21</div>
<div class="t r" style="left:1832.05px;top:1431.48px;font-size:17.5px;color:#666;transform:translateX(-50%);-webkit-text-stroke:0;">22</div>
<div class="t r" style="left:1890.83px;top:1431.48px;font-size:17.5px;color:#666;transform:translateX(-50%);-webkit-text-stroke:0;">23</div>
<div class="t r" style="left:2143.00px;top:1248.45px;font-size:18.6px;color:#666;transform:translateX(-100%);-webkit-text-stroke:0;">500 000</div>
<div class="t r" style="left:2143.00px;top:1334.25px;font-size:18.6px;color:#666;transform:translateX(-100%);-webkit-text-stroke:0;">250 000</div>
<div class="t r" style="left:2197.00px;top:1431.06px;font-size:18px;color:#666;transform:translateX(-50%);-webkit-text-stroke:0;">Пн</div>
<div class="t r" style="left:2281.00px;top:1431.06px;font-size:18px;color:#666;transform:translateX(-50%);-webkit-text-stroke:0;">Вт</div>
<div class="t r" style="left:2365.00px;top:1431.06px;font-size:18px;color:#666;transform:translateX(-50%);-webkit-text-stroke:0;">Ср</div>
<div class="t r" style="left:2449.00px;top:1431.06px;font-size:18px;color:#666;transform:translateX(-50%);-webkit-text-stroke:0;">Чт</div>
<div class="t r" style="left:2533.00px;top:1431.06px;font-size:18px;color:#666;transform:translateX(-50%);-webkit-text-stroke:0;">Пт</div>
<div class="t r" style="left:2617.00px;top:1431.06px;font-size:18px;color:#666;transform:translateX(-50%);-webkit-text-stroke:0;">Сб</div>
<div class="t r" style="left:2701.00px;top:1431.06px;font-size:18px;color:#666;transform:translateX(-50%);-webkit-text-stroke:0;">Нд</div>
<div class="t" style="left:419.20px;top:1555.63px;font-size:27.6px;color:#333;font-weight:700;">Популярні товари</div>
<div class="t" style="left:424.20px;top:1615.45px;font-size:19.9px;color:#333;font-weight:700;">Товар</div>
<div class="t" style="left:1103.80px;top:1615.45px;font-size:19.9px;color:#333;font-weight:700;">Замовлення</div>
<div class="t" style="left:1619.00px;top:1615.45px;font-size:19.9px;color:#333;font-weight:700;">Товар</div>
<div class="t" style="left:2426.80px;top:1615.45px;font-size:19.9px;color:#333;font-weight:700;">Замовлення</div>
<div class="t r" style="left:424.20px;top:1667.81px;font-size:20.3px;color:#3f79c1;">Паста з креветками</div>
<div class="t r" style="left:1103.80px;top:1667.81px;font-size:20.3px;color:#333;">316 шт.</div>
<div class="t r" style="left:1619.00px;top:1667.81px;font-size:20.3px;color:#3f79c1;">Капрезе</div>
<div class="t r" style="left:2426.80px;top:1667.81px;font-size:20.3px;color:#333;">301 шт.</div>
</body></html>
